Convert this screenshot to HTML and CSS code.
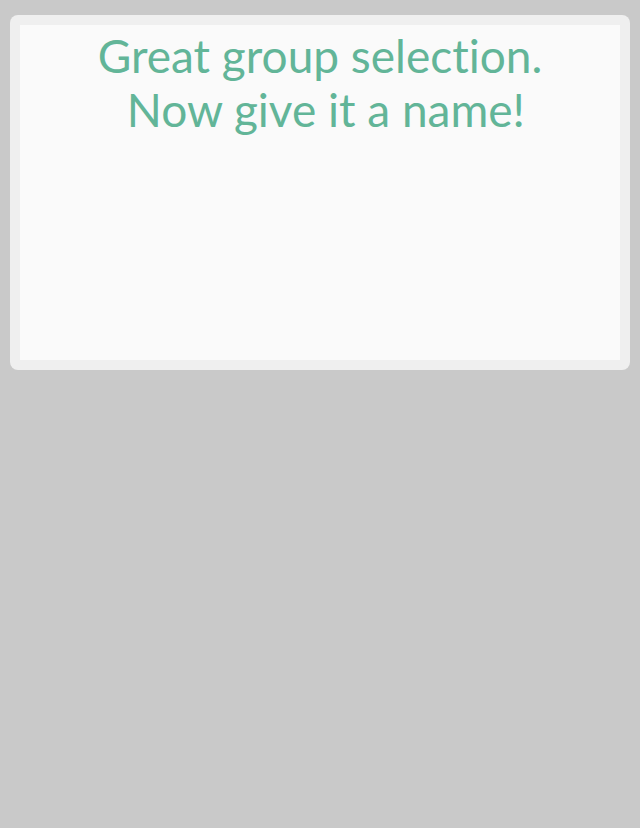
FILE: index.html
```html
<!DOCTYPE html>
<html>
<head>
<meta charset="utf-8">
<link rel="stylesheet" href="styles.css">
</head>
<body>
<div class="card">
  <div class="card-inner">
    <h1 class="title">Great group selection.<br>&nbsp;Now give it a name!</h1>
  </div>
</div>
</body>
</html>
```
FILE: styles.css
```css
html, body {
  margin: 0;
  padding: 0;
  background: #c9c9c9;
  height: 100%;
}
body {
  padding: 15px 10px 0;
  box-sizing: border-box;
}
.card {
  background: #efefef;
  border-radius: 8px;
  padding: 10px;
}
.card-inner {
  background: #fafafa;
  height: 335px;
}
.title {
  margin: 0;
  font-family: Lato, "Liberation Sans", sans-serif;
  font-weight: 400;
  font-size: 46px;
  line-height: 54px;
  color: #62b598;
  text-align: center;
  padding-top: 4px;
  font-variant-ligatures: none;
}
```
